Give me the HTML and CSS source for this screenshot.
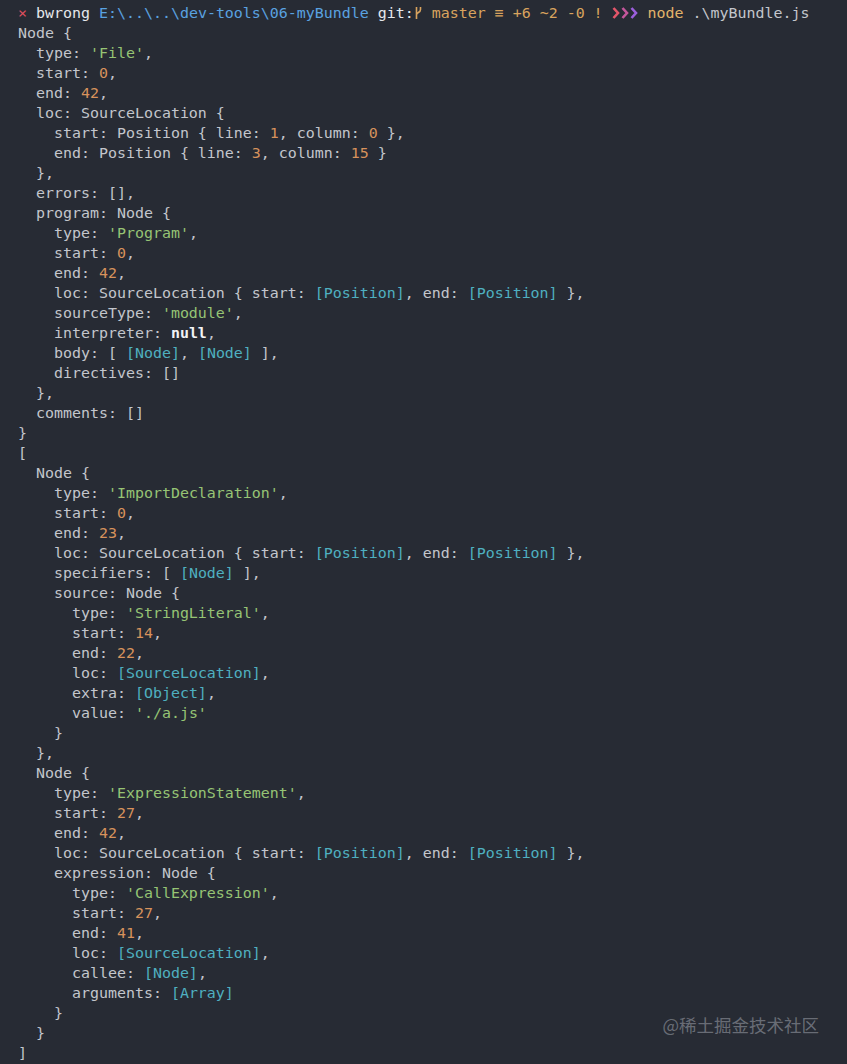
FILE: index.html
```html
<!DOCTYPE html>
<html>
<head>
<meta charset="utf-8">
<link rel="stylesheet" href="styles.css">
</head>
<body>
<pre class="term"><span class="tx">}</span>
<span class="x">×</span> <span class="user">bwrong</span> <span class="path">E:\..\..\dev-tools\06-myBundle</span> <span class="git">git:</span><svg class="branch" viewBox="0 0 9 20"><path d="M2.5 4 V16 M2.5 12 C2.5 9 6.5 10 6.5 6.5 V4" fill="none" stroke="#d9a35e" stroke-width="1.6"/></svg><span class="br"> master ≡ +6 ~2 -0 ! </span><svg class="chev" viewBox="0 0 27 20"><path d="M1.5 5 L6 10 L1.5 15" fill="none" stroke="#e4566a" stroke-width="2.6"/><path d="M10.5 5 L15 10 L10.5 15" fill="none" stroke="#c5579c" stroke-width="2.6"/><path d="M19.5 5 L24 10 L19.5 15" fill="none" stroke="#9b5fdc" stroke-width="2.6"/></svg> <span class="cmd">node</span> <span class="tx">.\myBundle.js</span>
Node {
  type: <span class="s">'File'</span>,
  start: <span class="n">0</span>,
  end: <span class="n">42</span>,
  loc: SourceLocation {
    start: Position { line: <span class="n">1</span>, column: <span class="n">0</span> },
    end: Position { line: <span class="n">3</span>, column: <span class="n">15</span> }
  },
  errors: [],
  program: Node {
    type: <span class="s">'Program'</span>,
    start: <span class="n">0</span>,
    end: <span class="n">42</span>,
    loc: SourceLocation { start: <span class="c">[Position]</span>, end: <span class="c">[Position]</span> },
    sourceType: <span class="s">'module'</span>,
    interpreter: <span class="nl">null</span>,
    body: [ <span class="c">[Node]</span>, <span class="c">[Node]</span> ],
    directives: []
  },
  comments: []
}
[
  Node {
    type: <span class="s">'ImportDeclaration'</span>,
    start: <span class="n">0</span>,
    end: <span class="n">23</span>,
    loc: SourceLocation { start: <span class="c">[Position]</span>, end: <span class="c">[Position]</span> },
    specifiers: [ <span class="c">[Node]</span> ],
    source: Node {
      type: <span class="s">'StringLiteral'</span>,
      start: <span class="n">14</span>,
      end: <span class="n">22</span>,
      loc: <span class="c">[SourceLocation]</span>,
      extra: <span class="c">[Object]</span>,
      value: <span class="s">'./a.js'</span>
    }
  },
  Node {
    type: <span class="s">'ExpressionStatement'</span>,
    start: <span class="n">27</span>,
    end: <span class="n">42</span>,
    loc: SourceLocation { start: <span class="c">[Position]</span>, end: <span class="c">[Position]</span> },
    expression: Node {
      type: <span class="s">'CallExpression'</span>,
      start: <span class="n">27</span>,
      end: <span class="n">41</span>,
      loc: <span class="c">[SourceLocation]</span>,
      callee: <span class="c">[Node]</span>,
      arguments: <span class="c">[Array]</span>
    }
  }
]</pre>
<div class="wm">@稀土掘金技术社区</div>
</body>
</html>
```

FILE: styles.css
```css
html, body {
  margin: 0;
  padding: 0;
  background: #272b34;
  height: 100%;
  overflow: hidden;
}
body {
  position: relative;
  width: 847px;
  height: 1064px;
}
.term {
  margin: -17px 0 0 0;
  padding: 0 0 0 18px;
  font-family: "DejaVu Sans Mono", "Liberation Mono", monospace;
  font-size: 14.95px;
  line-height: 20px;
  color: #c3c6cc;
}
.tx { color: #c3c6cc; }
.x { color: #e0505f; }
.user { color: #e6e8ec; }
.path { color: #5aa2e0; }
.git { color: #e6e8ec; }
.br { color: #d9a35e; }
.cmd { color: #e2b36a; }
.s { color: #96c474; }
.n { color: #d7925c; }
.c { color: #4fb0c0; }
.nl { color: #f2f3f5; font-weight: bold; }
.branch {
  display: inline-block;
  width: 9px;
  height: 20px;
  vertical-align: top;
}
.chev {
  display: inline-block;
  width: 27px;
  height: 20px;
  vertical-align: top;
}
.wm {
  position: absolute;
  right: 28px;
  top: 1013px;
  font-family: "Noto Sans CJK SC", "Noto Sans", sans-serif;
  font-size: 17.5px;
  line-height: 24px;
  color: rgba(200, 204, 212, 0.42);
}
```
